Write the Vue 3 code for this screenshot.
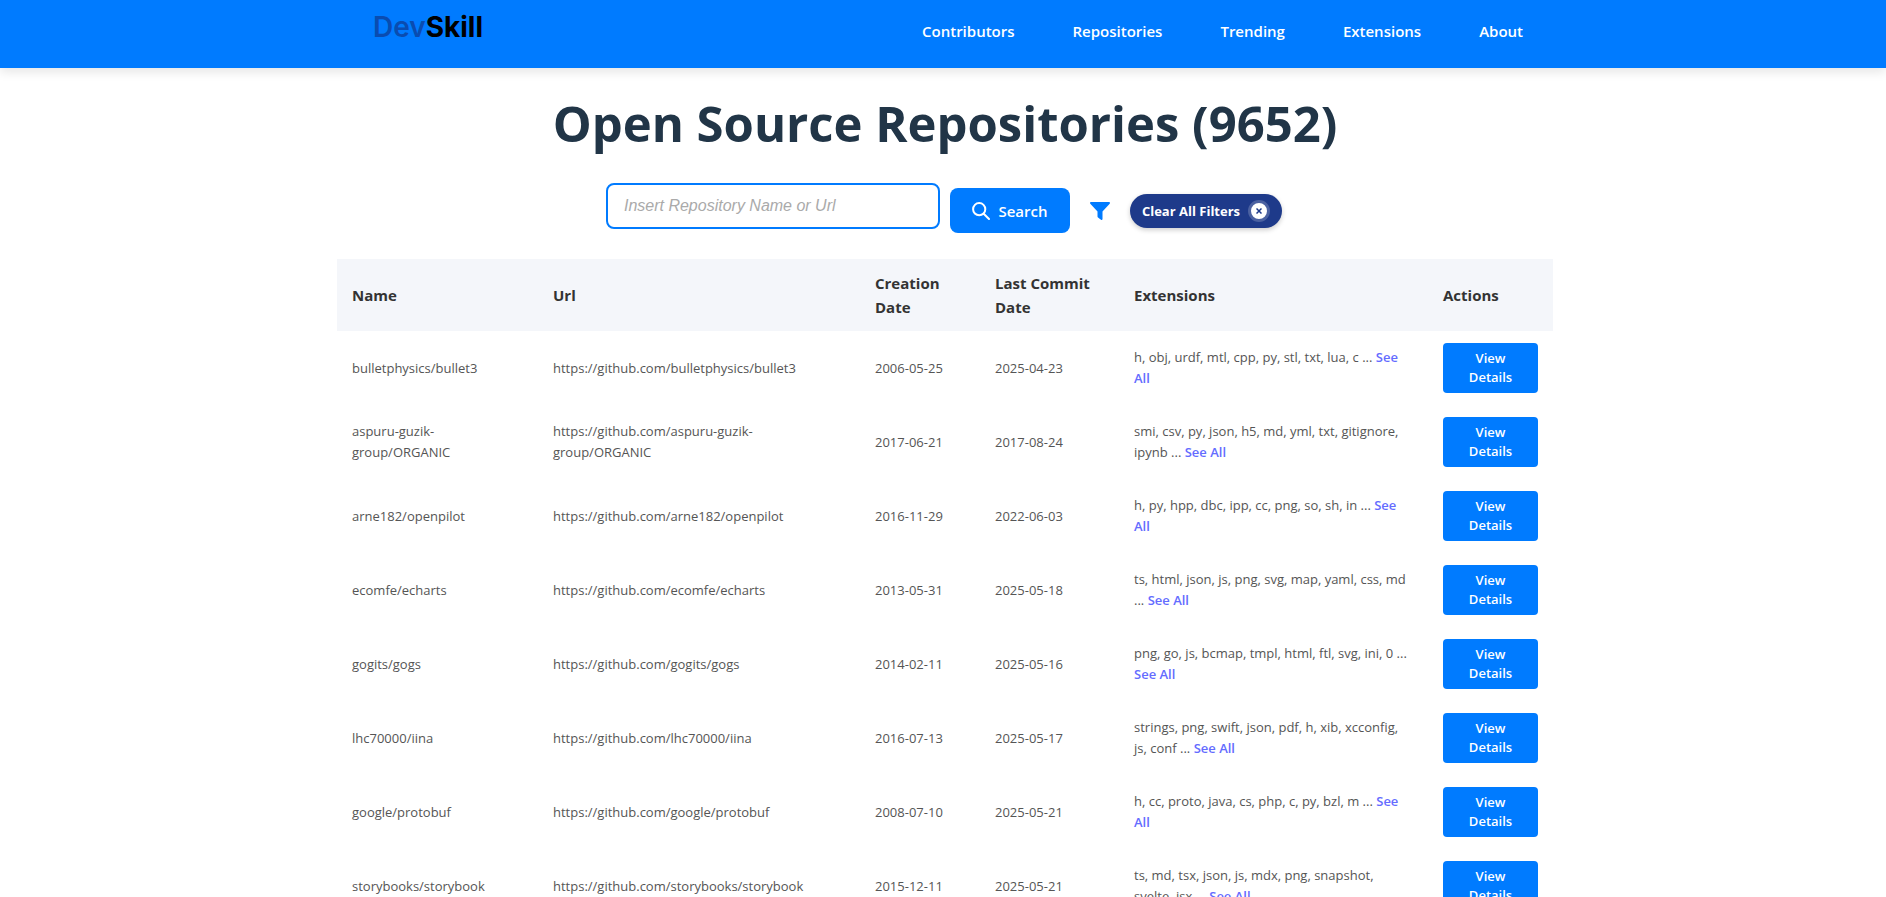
<script setup>
import { ref } from 'vue'

const query = ref('')

const links = ['Contributors', 'Repositories', 'Trending', 'Extensions', 'About']

const repositories = [
  { name: 'bulletphysics/bullet3', created: '2006-05-25', commit: '2025-04-23', extensions: 'h, obj, urdf, mtl, cpp, py, stl, txt, lua, c' },
  { name: 'aspuru-guzik-group/ORGANIC', created: '2017-06-21', commit: '2017-08-24', extensions: 'smi, csv, py, json, h5, md, yml, txt, gitignore, ipynb' },
  { name: 'arne182/openpilot', created: '2016-11-29', commit: '2022-06-03', extensions: 'h, py, hpp, dbc, ipp, cc, png, so, sh, in' },
  { name: 'ecomfe/echarts', created: '2013-05-31', commit: '2025-05-18', extensions: 'ts, html, json, js, png, svg, map, yaml, css, md' },
  { name: 'gogits/gogs', created: '2014-02-11', commit: '2025-05-16', extensions: 'png, go, js, bcmap, tmpl, html, ftl, svg, ini, 0' },
  { name: 'lhc70000/iina', created: '2016-07-13', commit: '2025-05-17', extensions: 'strings, png, swift, json, pdf, h, xib, xcconfig, js, conf' },
  { name: 'google/protobuf', created: '2008-07-10', commit: '2025-05-21', extensions: 'h, cc, proto, java, cs, php, c, py, bzl, m' },
  { name: 'storybooks/storybook', created: '2015-12-11', commit: '2025-05-21', extensions: 'ts, md, tsx, json, js, mdx, png, snapshot, svelte, jsx' },
]
</script>

<template>
  <div class="page">
    <header class="topbar">
      <div class="topbar-inner">
        <a class="logo" href="#"><span class="logo-dev">Dev</span>Skill</a>
        <nav class="nav">
          <a v-for="link in links" :key="link" href="#">{{ link }}</a>
        </nav>
      </div>
    </header>

    <main class="content">
      <h1>Open Source Repositories (9652)</h1>

      <form class="search" @submit.prevent>
        <input v-model="query" type="text" aria-label="Repository name or url" placeholder="Insert Repository Name or Url" />
        <button class="search-button" type="submit">
          <svg width="18" height="18" viewBox="0 0 18 18" fill="none" stroke="currentColor" stroke-width="2" stroke-linecap="round" aria-hidden="true">
            <circle cx="7.2" cy="7.2" r="6.1" />
            <path d="M11.7 11.7 17 17" />
          </svg>
          Search
        </button>
        <button class="filter-button" type="button" aria-label="Filters">
          <svg width="20" height="18" viewBox="0 0 20 18" fill="currentColor" aria-hidden="true">
            <path d="M1 0h18c1 0 1.300 1 .7 1.700L12.500 9.500V17c0 .9-.8 1.200-1.500.7L8 15.400a1.200 1.200 0 0 1-.5-1V9.500L.3 1.700C-.3 1 0 0 1 0Z" />
          </svg>
        </button>
        <button class="clear-button" type="button">
          Clear All Filters
          <span class="clear-icon">
            <svg width="6" height="6" viewBox="0 0 6 6" fill="none" stroke="currentColor" stroke-width="1.5" aria-hidden="true">
              <path d="m.5.5 5 5M5.500.5l-5 5" />
            </svg>
          </span>
        </button>
      </form>

      <table>
        <colgroup>
          <col class="col-name" />
          <col class="col-url" />
          <col class="col-created" />
          <col class="col-commit" />
          <col class="col-extensions" />
          <col class="col-actions" />
        </colgroup>
        <thead>
          <tr>
            <th>Name</th>
            <th>Url</th>
            <th>Creation Date</th>
            <th>Last Commit Date</th>
            <th>Extensions</th>
            <th>Actions</th>
          </tr>
        </thead>
        <tbody>
          <tr v-for="repo in repositories" :key="repo.name">
            <td>{{ repo.name }}</td>
            <td>https://github.com/{{ repo.name }}</td>
            <td>{{ repo.created }}</td>
            <td>{{ repo.commit }}</td>
            <td>{{ repo.extensions }} ... <a class="see-all" href="#">See All</a></td>
            <td><button class="details" type="button">View Details</button></td>
          </tr>
        </tbody>
      </table>
    </main>
  </div>
</template>

<style>
body {
  background: #fff;
}
</style>

<style scoped>
.page,
.page button {
  font-family: "Segoe UI", "Open Sans", "Noto Sans", sans-serif;
}

.page {
  height: 100vh;
  overflow: hidden;
}

.topbar {
  background: #007bff;
  box-shadow: 0 4px 10px rgba(0, 0, 0, 0.1);
}

.topbar-inner {
  display: flex;
  align-items: flex-start;
  justify-content: space-between;
  box-sizing: border-box;
  max-width: 1160px;
  height: 68px;
  margin: 0 auto;
  padding-left: 10px;
}

.logo {
  margin-top: 10px;
  color: #000;
  font: 700 28px/34px Inter, sans-serif;
  text-decoration: none;
}

.logo-dev {
  color: #0a4cb0;
  font-weight: 600;
}

.nav {
  display: flex;
  gap: 58px;
  margin-top: 19px;
}

.nav a {
  color: #fff;
  font-size: 15px;
  font-weight: 600;
  line-height: 24px;
  text-decoration: none;
}

.content {
  max-width: 1216px;
  margin: 0 auto;
  padding-left: 4px;
}

h1 {
  margin: 20px 0 25px;
  color: #213547;
  font-size: 49px;
  font-weight: 700;
  line-height: 70px;
  text-align: center;
}

.search {
  display: flex;
  align-items: center;
  justify-content: center;
  padding-right: 2px;
}

.search input {
  box-sizing: border-box;
  width: 334px;
  height: 46px;
  margin: 0 10px 9px 0;
  padding: 0 16px;
  border: 2px solid #007bff;
  border-radius: 8px;
  font: italic 16px "Liberation Sans", Arial, sans-serif;
}

.search input::placeholder {
  color: #aaa;
}

.search button {
  display: flex;
  align-items: center;
  border: 0;
  cursor: pointer;
}

.search .search-button {
  gap: 8px;
  justify-content: center;
  width: 120px;
  height: 45px;
  padding: 0;
  border-radius: 8px;
  background: #007bff;
  color: #fff;
  font-size: 15px;
  font-weight: 600;
}

.search .filter-button {
  margin: 0 20px;
  padding: 0;
  background: none;
  color: #007bff;
}

.search .clear-button {
  gap: 8px;
  height: 34px;
  padding: 0 12px;
  border-radius: 17px;
  background: #1e3a8a;
  box-shadow: 0 2px 5px rgba(0, 0, 0, 0.2);
  color: #fff;
  font-size: 13px;
  font-weight: 700;
}

.clear-icon {
  display: flex;
  align-items: center;
  justify-content: center;
  width: 16px;
  height: 16px;
  border: 3px solid #4b61a1;
  border-radius: 50%;
  background: #fff;
  color: #1e3a8a;
}

table {
  width: 100%;
  margin-top: 21px;
  border-collapse: collapse;
  table-layout: fixed;
}

.col-name { width: 201px; }
.col-url { width: 322px; }
.col-created { width: 120px; }
.col-commit { width: 139px; }
.col-extensions { width: 309px; }
.col-actions { width: 125px; }

th,
td {
  padding: 12px 15px;
  text-align: left;
}

th {
  background: #f4f6fa;
  color: #333;
  font-size: 15px;
  font-weight: 700;
  line-height: 24px;
}

td {
  color: #555;
  font-size: 13px;
  line-height: 21px;
}

.see-all {
  color: #646cff;
  font-weight: 600;
  text-decoration: none;
}

.details {
  display: block;
  width: 100%;
  padding: 6px 12px;
  border: 0;
  border-radius: 4px;
  background: #007bff;
  color: #fff;
  font-size: 13px;
  font-weight: 600;
  line-height: 19px;
  cursor: pointer;
}
</style>
